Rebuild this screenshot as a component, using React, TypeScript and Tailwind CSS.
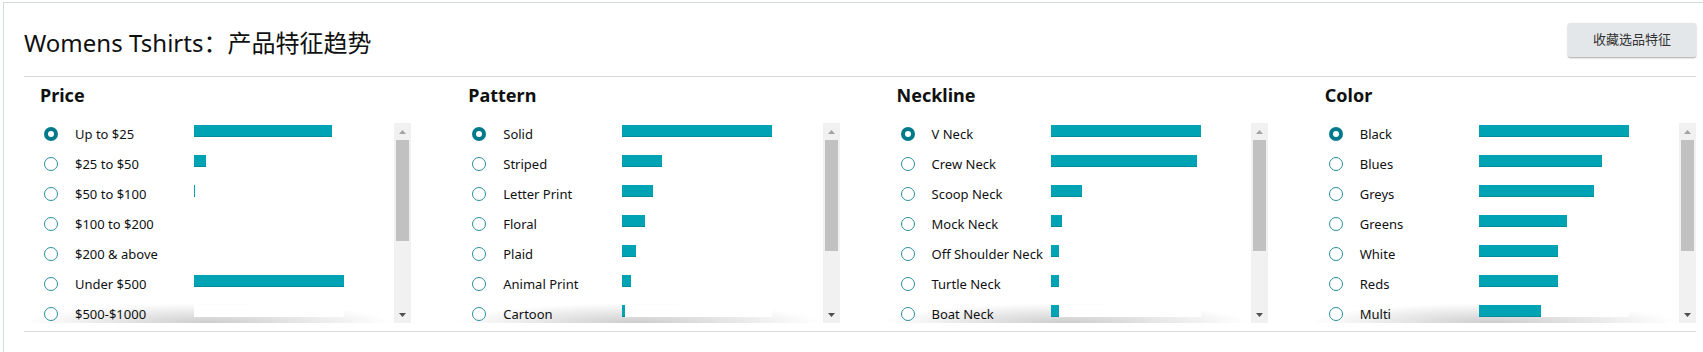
const columns: {
    title: string
    thumb: number
    rows: { label: string; value: number }[]
}[] = [
    {
        title: "Price",
        thumb: 101,
        rows: [
            { label: "Up to $25", value: 138 },
            { label: "$25 to $50", value: 12 },
            { label: "$50 to $100", value: 1 },
            { label: "$100 to $200", value: 0 },
            { label: "$200 & above", value: 0 },
            { label: "Under $500", value: 150 },
            { label: "$500-$1000", value: 0 },
        ],
    },
    {
        title: "Pattern",
        thumb: 111,
        rows: [
            { label: "Solid", value: 150 },
            { label: "Striped", value: 40 },
            { label: "Letter Print", value: 31 },
            { label: "Floral", value: 23 },
            { label: "Plaid", value: 14 },
            { label: "Animal Print", value: 9 },
            { label: "Cartoon", value: 3 },
        ],
    },
    {
        title: "Neckline",
        thumb: 111,
        rows: [
            { label: "V Neck", value: 150 },
            { label: "Crew Neck", value: 146 },
            { label: "Scoop Neck", value: 31 },
            { label: "Mock Neck", value: 11 },
            { label: "Off Shoulder Neck", value: 8 },
            { label: "Turtle Neck", value: 8 },
            { label: "Boat Neck", value: 8 },
        ],
    },
    {
        title: "Color",
        thumb: 111,
        rows: [
            { label: "Black", value: 150 },
            { label: "Blues", value: 123 },
            { label: "Greys", value: 115 },
            { label: "Greens", value: 88 },
            { label: "White", value: 79 },
            { label: "Reds", value: 79 },
            { label: "Multi", value: 62 },
        ],
    },
]

const Radio = ({ checked }: { checked: boolean }) =>
    checked ? (
        <div className="w-[14px] h-[14px] rounded-full bg-[#007a8a] flex items-center justify-center shrink-0">
            <div className="w-[6px] h-[6px] rounded-full bg-white" />
        </div>
    ) : (
        <div className="w-[14px] h-[14px] rounded-full border border-[#2a8f9d] bg-white shrink-0" />
    )

const Scrollbar = ({ thumb }: { thumb: number }) => (
    <div className="w-[17px] h-full bg-[#f1f1f1] flex flex-col items-center shrink-0">
        <div className="w-[17px] h-[17px] flex items-center justify-center">
            <svg width="7" height="4" viewBox="0 0 7 4">
                <polygon points="0,4 7,4 3.5,0" fill="#a3a3a3" />
            </svg>
        </div>
        <div className="w-[13px] bg-[#c1c1c1]" style={{ height: thumb }} />
        <div className="flex-1" />
        <div className="w-[17px] h-[17px] flex items-center justify-center">
            <svg width="7" height="4" viewBox="0 0 7 4">
                <polygon points="0,0 7,0 3.5,4" fill="#505050" />
            </svg>
        </div>
    </div>
)

const FeatureColumn = ({ col }: { col: (typeof columns)[number] }) => (
    <div className="flex flex-col">
        <h2 className="pl-[16px] mt-[6px] text-[18px] leading-[24px] font-bold text-[#0f1111]">
            {col.title}
        </h2>
        <div className="mt-[16px] h-[200px] flex">
            <div className="relative flex-1 overflow-hidden">
                {/* bottom fade */}
                <div className="absolute left-0 right-0 bottom-0 h-[20px] bg-[radial-gradient(ellipse_at_bottom,rgba(0,0,0,0.2),transparent_70%)]" />
                <div className="relative flex flex-col">
                    {col.rows.map((row, i) => (
                        <div key={row.label} className="flex items-start h-[22px] mb-[8px] pl-[20px]">
                            <div className="h-[22px] flex items-center">
                                <Radio checked={i === 0} />
                            </div>
                            <div className="ml-[17px] w-[119px] h-[22px] flex items-center">
                                <span className="text-[13px] leading-[16px] text-[#0f1111] whitespace-nowrap">
                                    {row.label}
                                </span>
                            </div>
                            <div className="mt-[2px] w-[150px] h-[12px] bg-white">
                                <div
                                    className="h-full bg-[#00a3b4] border-b border-[#008c99]"
                                    style={{ width: row.value, borderBottomWidth: row.value ? 1 : 0 }}
                                />
                            </div>
                        </div>
                    ))}
                </div>
            </div>
            <Scrollbar thumb={col.thumb} />
        </div>
    </div>
)

const App = () => {
    return (
        <div className="w-[1703px] h-[352px] overflow-hidden bg-white font-['Noto_Sans','Noto_Sans_CJK_SC',sans-serif]">
            <div className="ml-[3px] mt-[2px] w-[1713px] h-[360px] border-l border-t border-[#d5dbdb] px-[20px]">
                {/* Header */}
                <div className="h-[74px] pt-[20px] border-b border-[#d5d9d9] flex items-start justify-between">
                    <h1 className="mt-[4px] text-[24px] leading-[32px] text-[#0f1111]">
                        Womens Tshirts：产品特征趋势
                    </h1>
                    <button className="w-[128px] h-[34px] rounded-[2px] bg-[#e4e7ea] text-[13px] text-[#333] shadow-[0_1px_2px_rgba(0,0,0,0.35)]">
                        收藏选品特征
                    </button>
                </div>

                {/* Columns */}
                <div className="grid grid-cols-4 gap-x-[41px] pb-[8px] border-b border-[#dcdcdc]">
                    {columns.map((col) => (
                        <FeatureColumn key={col.title} col={col} />
                    ))}
                </div>
            </div>
        </div>
    )
}

export default App
